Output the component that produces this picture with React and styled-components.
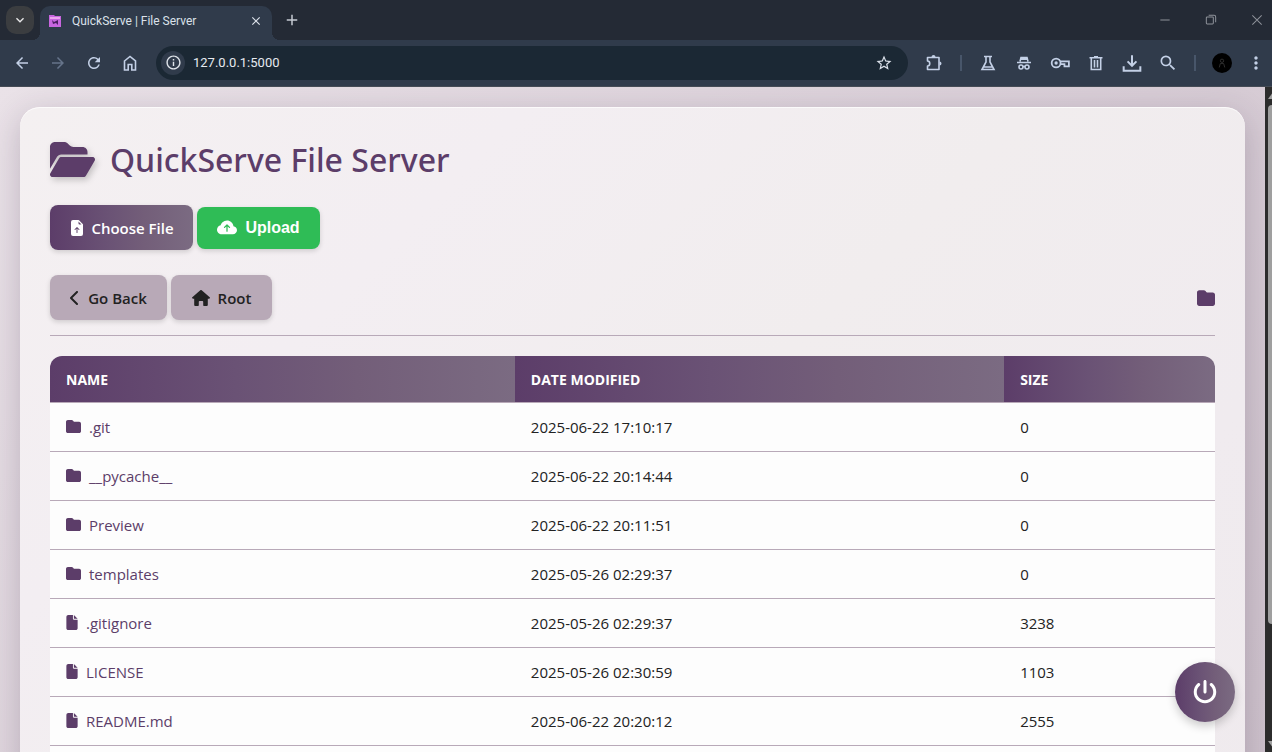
import React from "react";
import styled, { createGlobalStyle, css } from "styled-components";
import { FaFolderOpen, FaFolder, FaFile, FaChevronLeft, FaPowerOff } from "react-icons/fa6";
import { BsFileEarmarkArrowUpFill, BsCloudArrowUpFill } from "react-icons/bs";
import {
  MdArrowBack, MdArrowForward, MdRefresh, MdInfoOutline, MdStarBorder,
  MdSearch, MdMoreVert, MdClose, MdAdd, MdKeyboardArrowDown,
} from "react-icons/md";

const plum = "#5c3d69";
const mauve = "#b8a9b8";
const plumGradient = "linear-gradient(90deg, #5c3d69 0%, #6a5275 40%, #735e79 66%, #7b6b82 100%)";
const uiFont = '"Open Sans", "Noto Sans", sans-serif';

const GlobalStyle = createGlobalStyle`
  * { box-sizing: border-box; }
  html, body { margin: 0; padding: 0; overflow: hidden; }
  body { font-family: ${uiFont}; color: #222; }
  button, input { font-family: inherit; }
  svg { display: block; flex: none; }
`;

const Window = styled.div`
  display: flex;
  flex-direction: column;
  height: 100vh;
`;

const TabStrip = styled.header`
  display: flex;
  align-items: center;
  height: 40px;
  flex: none;
  padding-left: 6px;
  background: #242a35;
  color: #dbe1ea;
`;

const TabSearch = styled.button`
  display: grid;
  place-items: center;
  width: 28px;
  height: 28px;
  padding: 0;
  border: 0;
  border-radius: 10px;
  background: #3b3d40;
  color: #e8e8e8;
`;

const Tab = styled.div`
  position: relative;
  display: flex;
  align-items: center;
  align-self: flex-end;
  width: 232px;
  height: 34px;
  margin-left: 6px;
  padding: 0 8px 4px;
  border-radius: 10px 10px 0 0;
  background: #303b4b;
  font-family: Roboto, sans-serif;
  font-size: 12px;
  &::before, &::after {
    content: "";
    position: absolute;
    bottom: 0;
    width: 8px;
    height: 8px;
  }
  &::before {
    left: -8px;
    background: radial-gradient(circle at 0 0, transparent 8px, #303b4b 8px);
  }
  &::after {
    right: -8px;
    background: radial-gradient(circle at 100% 0, transparent 8px, #303b4b 8px);
  }
`;

const TabTitle = styled.span`
  flex: 1;
  margin-left: 10px;
  white-space: nowrap;
`;

const PlainButton = styled.button`
  display: grid;
  place-items: center;
  width: ${(p) => p.$w || 36}px;
  height: ${(p) => p.$h || 28}px;
  padding: 0;
  border: 0;
  background: none;
  color: ${(p) => p.$tone || "#c3d0e6"};
`;

const WindowControls = styled.div`
  display: flex;
  margin-left: auto;
  margin-right: -8px;
`;

const Toolbar = styled.nav`
  display: flex;
  align-items: center;
  height: 47px;
  flex: none;
  padding: 0 0 1px 4px;
  border-bottom: 1px solid #454b55;
  background: #303b4b;
`;

const AddressBar = styled.div`
  display: flex;
  align-items: center;
  flex: 1;
  height: 34px;
  margin: 0 8px;
  padding: 0 6px 0 5px;
  border-radius: 17px;
  background: #1b2834;
`;

const SiteInfo = styled(PlainButton)`
  width: 24px;
  height: 24px;
  border-radius: 50%;
  background: #303b4b;
  color: #dfe4ea;
`;

const Address = styled.input`
  flex: 1;
  min-width: 0;
  margin-left: 8px;
  padding: 0;
  border: 0;
  outline: 0;
  background: none;
  color: #e6eaf0;
  font-family: Roboto, sans-serif;
  font-size: 13px;
`;

const Divider = styled.span`
  width: 2px;
  height: 16px;
  margin: 0 8px;
  background: #48566a;
`;

const Avatar = styled.span`
  display: grid;
  place-items: center;
  width: 20px;
  height: 20px;
  border-radius: 50%;
  background: #000;
  color: #333;
`;

const Viewport = styled.div`
  display: flex;
  flex: 1;
  min-height: 0;
`;

const Page = styled.div`
  flex: 1;
  padding: 20px 20px 0;
  overflow: hidden;
  background: linear-gradient(135deg, #eae2e8 0%, #d8cdd6 60%, #cec2cc 100%);
`;

const Scrollbar = styled.div`
  display: flex;
  flex-direction: column;
  width: 7px;
  padding: 5px 0 4px 3px;
  overflow: hidden;
  background: #2c2c2c;
  color: #a0a0a0;
`;

const ScrollThumb = styled.div`
  flex: 1;
  margin: 6px 0 117px;
  border-radius: 4px 0 0 4px;
  background: #9f9f9f;
`;

const Card = styled.main`
  min-height: 800px;
  padding: 30px;
  border-radius: 20px;
  background: linear-gradient(135deg, #f4f0f1 0%, #f3eef2 25%, #f1edee 50%, #f0ebef 75%, #efeaed 100%);
  box-shadow: 0 8px 32px rgba(60, 40, 70, 0.24), inset 0 1px 0 rgba(255, 255, 255, 0.7);
`;

const Title = styled.h1`
  display: flex;
  align-items: center;
  gap: 15px;
  height: 45px;
  margin: 0 0 23px;
  color: ${plum};
  font-family: "Noto Sans", "Open Sans", sans-serif;
  font-size: 32px;
  font-weight: 500;
  white-space: nowrap;
  svg { filter: drop-shadow(2px 3px 3px rgba(0, 0, 0, 0.2)); }
`;

const Actions = styled.div`
  display: flex;
  align-items: center;
  gap: 4px;
  margin-bottom: ${(p) => p.$after}px;
`;

const actionLook = css`
  display: flex;
  align-items: center;
  justify-content: center;
  gap: 8px;
  height: 45px;
  padding: 0;
  border: 0;
  border-radius: 8px;
  box-shadow: 0 2px 5px rgba(0, 0, 0, 0.15);
  font-size: 15px;
  font-weight: 600;
  white-space: nowrap;
`;

const ChooseButton = styled.button`
  ${actionLook}
  width: 143px;
  gap: 6px;
  background: ${plumGradient};
  color: #fff;
`;

const UploadButton = styled.button`
  ${actionLook}
  width: 123px;
  height: 42px;
  background: #2fbc56;
  color: #fff;
  && { font-family: "Liberation Sans", sans-serif; }
  font-size: 16px;
  font-weight: 700;
`;

const NavLink = styled.a`
  ${actionLook}
  width: ${(p) => p.$w}px;
  background: #b8a9b7;
  color: #222;
  text-decoration: none;
`;

const BackIcon = styled(FaChevronLeft)`
  width: 10px;
  height: 16px;
`;

const CurrentFolder = styled.span`
  margin-left: auto;
  color: ${plum};
`;

const Rule = styled.hr`
  height: 1px;
  margin: 0 0 20px;
  border: 0;
  background: ${mauve};
`;

const TableFrame = styled.div`
  padding-bottom: 48px;
  border-radius: 12px 12px 0 0;
  overflow: hidden;
  background: #fdfdfd;
`;

const FileTable = styled.table`
  width: 100%;
  border-collapse: separate;
  border-spacing: 0;
  table-layout: fixed;
  font-size: 15px;
`;

const HeadCell = styled.th`
  width: ${(p) => p.$w};
  height: 47px;
  padding: 0 16px;
  border-bottom: 1px solid ${mauve};
  background: ${plumGradient};
  color: #fff;
  font-size: 14px;
  font-weight: 700;
  text-align: left;
  text-transform: uppercase;
`;

const Cell = styled.td`
  height: 49px;
  padding: 0 16px;
  border-bottom: 1px solid ${mauve};
`;

const FileLink = styled.a`
  color: ${plum};
  text-decoration: none;
  svg {
    display: inline-block;
    width: ${(p) => (p.$folder ? 15 : 12)}px;
    height: 15px;
    margin-right: 8px;
    vertical-align: -1px;
  }
`;

const PowerButton = styled.button`
  position: fixed;
  right: 37px;
  bottom: 30px;
  display: grid;
  place-items: center;
  width: 60px;
  height: 60px;
  padding: 0;
  border: 0;
  border-radius: 50%;
  background: ${plumGradient};
  box-shadow: 0 4px 10px rgba(0, 0, 0, 0.2);
  color: #fff;
`;

const files = [
  [".git", "2025-06-22 17:10:17", "0", true],
  ["__pycache__", "2025-06-22 20:14:44", "0", true],
  ["Preview", "2025-06-22 20:11:51", "0", true],
  ["templates", "2025-05-26 02:29:37", "0", true],
  [".gitignore", "2025-05-26 02:29:37", "3238", false],
  ["LICENSE", "2025-05-26 02:30:59", "1103", false],
  ["README.md", "2025-06-22 20:20:12", "2555", false],
];

const Line = ({ size = 18, children, ...rest }) => (
  <svg width={size} height={size} viewBox="0 0 18 18" fill="none" stroke="currentColor" strokeWidth="1.6" {...rest}>
    {children}
  </svg>
);

const Favicon = () => (
  <svg width="14" height="14" viewBox="0 0 14 14">
    <path d="M1 1h5l1 1h6v11H1z" fill="#c866e0" />
    <path d="M2 3h10v2H2z" fill="#eba6ef" />
    <path d="M4 6l2 2 4-2v5l-2-2-3 1z" fill="#4b1d63" />
  </svg>
);
const Extension = () => (
  <Line>
    <path d="M2.500 3.500h11.500v12H2.500v-3.500c3 0 3-5 0-5z" strokeLinejoin="round" />
    <path d="M6.500 3a2 2 0 0 1 4 0zM14.500 7.500a2 2 0 0 1 0 4z" fill="currentColor" stroke="none" />
  </Line>
);
const HomeOutline = () => <Line><path d="M3.500 7L9 2.500 14.500 7v9h-3.700v-5.500H7.200V16H3.500z" /></Line>;
const Flask = () => <Line><path d="M5 2.500h8M7 3v5L3 15.500h12L11 8V3M5 13h8" /></Line>;
const Incognito = () => (
  <Line>
    <path d="M2 8.500h14M5 7.500l1-4h6l1 4" />
    <circle cx="6" cy="13" r="2" /><circle cx="12" cy="13" r="2" /><path d="M8 12.500h2" />
    <path d="M6 4h6v2H6z" fill="currentColor" stroke="none" />
  </Line>
);
const Key = () => (
  <Line size={20}>
    <circle cx="5.500" cy="9" r="4" /><circle cx="5.500" cy="9" r="1.500" fill="currentColor" stroke="none" />
    <path d="M9.500 7.500H17v4.500h-4v-2H9.300" />
  </Line>
);
const Trash = () => <Line><path d="M2.500 3.800h13M7 2.800h4M4.300 4v11.500h9.400V4M7.500 6v7.500M10.500 6v7.500" /></Line>;
const Download = () => <Line size={20} strokeWidth="1.800"><path d="M9 2v9M5 7.500l4 4 4-4M1.500 12v4h15v-4" /></Line>;

const House = () => (
  <svg width="18" height="16" viewBox="0 0 18 16" fill="currentColor">
    <path d="M8.300.3a1 1 0 0 1 1.400 0l8 6.900c.6.600.2 1.600-.7 1.600h-1.200v5.900c0 .8-.5 1.300-1.300 1.300h-2.300c-.6 0-1-.4-1-1v-3c0-.6-.4-1-1-1H7.800c-.6 0-1 .4-1 1v3c0 .6-.4 1-1 1H3.500c-.8 0-1.300-.5-1.300-1.300V8.800H1c-.9 0-1.300-1-.7-1.600z" />
  </svg>
);

const ScrollArrow = ({ down }) => (
  <svg width="10" height="7" viewBox="0 0 10 7" fill="currentColor">
    <path d={down ? "M0 0h10L5 7z" : "M0 7h10L5 0z"} />
  </svg>
);

export default function App() {
  return (
    <Window>
      <GlobalStyle />
      <TabStrip>
        <TabSearch aria-label="Search tabs"><MdKeyboardArrowDown size={16} /></TabSearch>
        <Tab>
          <Favicon />
          <TabTitle>QuickServe | File Server</TabTitle>
          <PlainButton $w={16} $h={16} $tone="#dbe1ea" aria-label="Close tab"><MdClose size={14} /></PlainButton>
        </Tab>
        <PlainButton $w={40} $tone="#c5cad2" aria-label="New tab"><MdAdd size={18} /></PlainButton>
        <WindowControls>
          <PlainButton $w={46} $tone="#8d9199" aria-label="Minimize"><Line size={14} strokeWidth="1.300"><path d="M3 9h12" /></Line></PlainButton>
          <PlainButton $w={46} $tone="#8d9199" aria-label="Restore"><Line size={14} strokeWidth="1.300"><rect x="3" y="5" width="9" height="9" rx="1" /><path d="M6 3h7q2 0 2 2v7" /></Line></PlainButton>
          <PlainButton $w={46} $tone="#8d9199" aria-label="Close"><Line size={14} strokeWidth="1.300"><path d="M3 3l12 12M15 3L3 15" /></Line></PlainButton>
        </WindowControls>
      </TabStrip>

      <Toolbar>
        <PlainButton aria-label="Back"><MdArrowBack size={18} /></PlainButton>
        <PlainButton $tone="#66748a" aria-label="Forward"><MdArrowForward size={18} /></PlainButton>
        <PlainButton aria-label="Reload"><MdRefresh size={18} /></PlainButton>
        <PlainButton aria-label="Home"><HomeOutline /></PlainButton>
        <AddressBar>
          <SiteInfo aria-label="Site information"><MdInfoOutline size={17} /></SiteInfo>
          <Address aria-label="Address" defaultValue="127.0.0.1:5000" />
          <PlainButton $tone="#dbe1ea" aria-label="Bookmark"><MdStarBorder size={18} /></PlainButton>
        </AddressBar>
        <PlainButton aria-label="Extensions"><Extension /></PlainButton>
        <Divider />
        <PlainButton aria-label="Labs"><Flask /></PlainButton>
        <PlainButton aria-label="Incognito"><Incognito /></PlainButton>
        <PlainButton aria-label="Passwords"><Key /></PlainButton>
        <PlainButton aria-label="Clear data"><Trash /></PlainButton>
        <PlainButton aria-label="Downloads"><Download /></PlainButton>
        <PlainButton aria-label="Search"><MdSearch size={20} /></PlainButton>
        <Divider />
        <PlainButton aria-label="Profile">
          <Avatar><Line size={10}><circle cx="9" cy="5" r="3" /><path d="M4 17l2-7h6l2 7" /></Line></Avatar>
        </PlainButton>
        <PlainButton $w={32} aria-label="Menu"><MdMoreVert size={20} /></PlainButton>
      </Toolbar>

      <Viewport>
        <Page>
          <Card>
            <Title><FaFolderOpen size={45} />QuickServe File Server</Title>
            <Actions $after={25}>
              <ChooseButton><BsFileEarmarkArrowUpFill size={16} />Choose File</ChooseButton>
              <UploadButton><BsCloudArrowUpFill size={20} />Upload</UploadButton>
            </Actions>
            <Actions $after={15}>
              <NavLink href="#back" $w={117}><BackIcon />Go Back</NavLink>
              <NavLink href="#root" $w={101}><House />Root</NavLink>
              <CurrentFolder><FaFolder size={18} /></CurrentFolder>
            </Actions>
            <Rule />
            <TableFrame>
              <FileTable>
                <thead>
                  <tr>
                    <HeadCell $w="39.9%">Name</HeadCell>
                    <HeadCell $w="42%">Date Modified</HeadCell>
                    <HeadCell>Size</HeadCell>
                  </tr>
                </thead>
                <tbody>
                  {files.map(([name, date, size, isFolder]) => (
                    <tr key={name}>
                      <Cell>
                        <FileLink href={"#" + name} $folder={isFolder}>
                          {isFolder ? <FaFolder /> : <FaFile />}{name}
                        </FileLink>
                      </Cell>
                      <Cell>{date}</Cell>
                      <Cell>{size}</Cell>
                    </tr>
                  ))}
                </tbody>
              </FileTable>
            </TableFrame>
          </Card>
          <PowerButton aria-label="Shut down"><FaPowerOff size={24} /></PowerButton>
        </Page>
        <Scrollbar><ScrollArrow /><ScrollThumb /><ScrollArrow down /></Scrollbar>
      </Viewport>
    </Window>
  );
}
